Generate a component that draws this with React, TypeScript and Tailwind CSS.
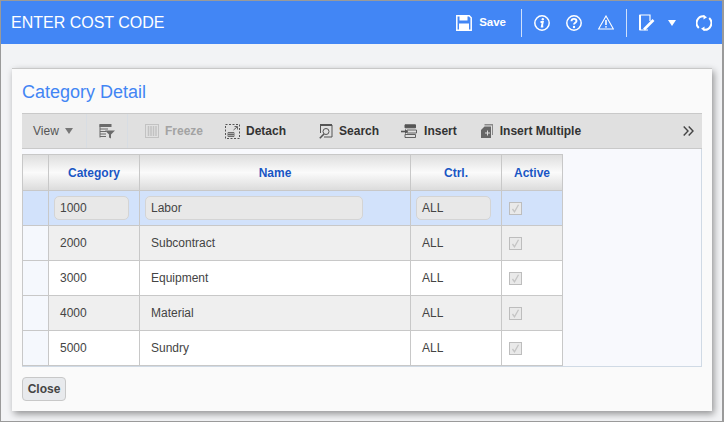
const rows = [
  { code: "1000", name: "Labor", ctrl: "ALL" },
  { code: "2000", name: "Subcontract", ctrl: "ALL" },
  { code: "3000", name: "Equipment", ctrl: "ALL" },
  { code: "4000", name: "Material", ctrl: "ALL" },
  { code: "5000", name: "Sundry", ctrl: "ALL" },
];

function SaveIcon() {
  return (
    <svg width="16" height="16" viewBox="0 0 16 16" fill="none" stroke="#fff" strokeWidth="1.5">
      <path d="M.8.8h12.400l2 2v12.400H.8z" />
      <rect x="3.500" y="1" width="8" height="4.500" fill="#fff" stroke="none" />
      <rect x="3" y="8.500" width="10" height="6.500" fill="#fff" stroke="none" />
    </svg>
  );
}

function InfoIcon() {
  return (
    <svg width="16" height="16" viewBox="0 0 16 16" fill="none" stroke="#fff">
      <circle cx="8" cy="8" r="7.200" strokeWidth="1.500" />
      <circle cx="8.800" cy="4.300" r="1.200" fill="#fff" stroke="none" />
      <path d="M6.500 7h2.300l-1 4.500h1.500" strokeWidth="1.900" />
    </svg>
  );
}

function HelpIcon() {
  return (
    <svg width="16" height="16" viewBox="0 0 16 16" fill="none" stroke="#fff">
      <circle cx="8" cy="8" r="7.200" strokeWidth="1.500" />
      <path d="M5.500 6.200c0-3.100 5-3.100 5-.2 0 1.800-2.500 1.800-2.500 3.600" strokeWidth="1.900" />
      <circle cx="8" cy="12" r="1.200" fill="#fff" stroke="none" />
    </svg>
  );
}

function WarnIcon() {
  return (
    <svg width="16" height="15" viewBox="0 0 16 15" fill="none" stroke="#fff">
      <path d="M8 1 15.400 14H.6z" strokeWidth="1.100" />
      <path d="M8 5v5" strokeWidth="1.600" />
      <circle cx="8" cy="11.800" r=".9" fill="#fff" stroke="none" />
    </svg>
  );
}

function NoteIcon() {
  return (
    <svg width="16" height="17" viewBox="0 0 16 17" fill="none" stroke="#fff">
      <path d="M9 16H1V1h10v6" strokeWidth="1.200" />
      <path d="M1 1v15" strokeWidth="2" />
      <path d="M5 15.500 14.500 6" strokeWidth="2.600" />
    </svg>
  );
}

function RefreshIcon() {
  return (
    <svg width="16" height="16" viewBox="0 0 16 16" fill="none" stroke="#fff" strokeWidth="2">
      <path d="M2.800 13A6.800 6.800 0 0 1 8.500 1.300" />
      <path d="M13.200 3a6.800 6.800 0 0 1-5.700 11.700" />
      <path d="M7.500 0v4.500l3.500-2.200z" fill="#fff" stroke="none" />
      <path d="M8.500 16v-4.500l-3.500 2.200z" fill="#fff" stroke="none" />
    </svg>
  );
}

function FilterIcon() {
  return (
    <svg width="16" height="15" viewBox="0 0 16 15" fill="none" stroke="#6b6b6b">
      <path d="M.5 1.500h12" strokeWidth="3" />
      <path d="M1 5h8M1 7.500h6M1 10h6M1 12.500h6" strokeWidth="1.200" />
      <path d="M1 .5v13" />
      <path d="M6 6.500h10l-4 4v4l-2-1v-3z" fill="#6b6b6b" stroke="none" />
    </svg>
  );
}

function FreezeIcon() {
  return (
    <svg width="14" height="14" viewBox="0 0 14 14" fill="none" stroke="#c2c2c2">
      <rect x=".5" y=".5" width="13" height="13" />
      <path d="M3.500 2v10M6 2v10M8.500 2v10M11 2v10" strokeWidth="1.500" />
    </svg>
  );
}

function DetachIcon() {
  return (
    <svg width="15" height="15" viewBox="0 0 15 15" fill="none" stroke="#555">
      <rect x=".5" y=".5" width="14" height="14" strokeDasharray="2 1.500" />
      <path d="M3 8.500h6v4H3zM5 8.500v4M7 8.500v4M3 10.500h6" strokeWidth=".8" />
      <path d="M8.500 6 12 3M9.500 2.500H12.500V5.500" strokeWidth=".9" />
    </svg>
  );
}

function SearchIcon() {
  return (
    <svg width="14" height="15" viewBox="0 0 14 15" fill="none" stroke="#555">
      <path d="M1.500 9V1H13v12H5" />
      <path d="M1 1h12" strokeWidth="2" />
      <circle cx="7" cy="7.500" r="3" />
      <path d="M5 10 .8 14.200" strokeWidth="1.600" />
    </svg>
  );
}

function InsertIcon() {
  return (
    <svg width="16" height="14" viewBox="0 0 16 14" fill="none" stroke="#555">
      <path d="M4 .8h10.500v3H4z" fill="#555" />
      <path d="M6 6h9.500v3H6zM4 10.500h10.500v3H4z" strokeWidth=".9" />
      <path d="M0 7.500h5" strokeWidth="1.600" />
      <path d="M4 5v5l3-2.500z" fill="#555" stroke="none" />
    </svg>
  );
}

function InsertMultipleIcon() {
  return (
    <svg width="12" height="14" viewBox="0 0 12 14">
      <path d="M3.500 0H12v11h-1V1.500H3.500z" fill="#8a8a8a" />
      <path d="M3.500 2.500H10V14H0V6z" fill="#666" />
      <path d="M4 8.500h2v-2h1v2h2v1H7v2H6v-2H4z" fill="#ddd" />
    </svg>
  );
}

function MoreIcon() {
  return (
    <svg width="11" height="10" viewBox="0 0 11 10" fill="none" stroke="#444" strokeWidth="1.400">
      <path d="M.7.5 5 5 .7 9.500M5.700.5 10 5 5.700 9.500" />
    </svg>
  );
}

function ToolButton({ icon, label, className, gap }: { icon: React.ReactNode; label: string; className?: string; gap?: string }) {
  return (
    <div className={`flex items-center ${gap ?? "gap-[6px]"} ${className ?? ""}`}>
      {icon}
      <span className="font-bold">{label}</span>
    </div>
  );
}

function TextBox({ value, width }: { value: string; width: string }) {
  return (
    <div className={`${width} h-[24px] bg-[#e8e8e8] border border-[#d4d4d4] rounded-[5px] pl-[5px] flex items-center text-[12px] text-[#444]`}>
      {value}
    </div>
  );
}

function CheckCell() {
  return (
    <div className="w-[13px] h-[13px] border border-[#bdbdbd] bg-[#e9e9e9] flex items-center justify-center">
      <svg width="9" height="9" viewBox="0 0 9 9" fill="none" stroke="#c4c4c4" strokeWidth="1.300">
        <path d="M1.500 5 3.500 7.800 7.500 .8" />
      </svg>
    </div>
  );
}

const colClass = "grid grid-cols-[27px_91px_271px_91px_61px]";

export default function App() {
  return (
    <div className="w-[724px] h-[422px] overflow-hidden bg-[#f2f3f5] flex flex-col border-t border-l border-r-2 border-b border-t-[#9a9a9a] border-l-[#9a9a9a] border-r-[#9a9a9a] border-b-[#9a9a9a] font-['Liberation_Sans',Arial,sans-serif]">
      {/* Header */}
      <div className="h-[43px] shrink-0 bg-[#4286f5] flex items-center text-white pl-[10px]">
        <h1 className="text-[16px] leading-none flex-1">ENTER COST CODE</h1>
        <div className="flex items-center gap-[7px] text-[11.500px] font-bold">
          <SaveIcon />
          <span>Save</span>
        </div>
        <div className="w-px h-[28px] bg-[#cfe0fb] ml-[15px] mr-[12px]" />
        <div className="flex items-center gap-[16px]">
          <InfoIcon />
          <HelpIcon />
          <WarnIcon />
        </div>
        <div className="w-px h-[28px] bg-[#cfe0fb] ml-[12px] mr-[12px]" />
        <NoteIcon />
        <div className="ml-[13px] w-0 h-0 border-x-[4.500px] border-x-transparent border-t-[6px] border-t-white" />
        <div className="ml-[20px] mr-[10px]">
          <RefreshIcon />
        </div>
      </div>

      {/* Dialog */}
      <div className="ml-[11px] mt-[24px] w-[700px] h-[343px] bg-[#fafafa] border-t border-[#c8c8c8] shadow-[2px_3px_7px_rgba(0,0,0,0.4)] flex flex-col px-[10px]">
        <h2 className="mt-[13px] h-[20px] text-[18px] leading-[20px] text-[#4285f4]">Category Detail</h2>

        <div className="mt-[11px] h-[36px] shrink-0 bg-[#e0e0e0] border-y border-[#c9c9c9] flex items-center text-[12px] text-[#333]">
          <div className="w-[65px] h-full flex items-center gap-[6px] pl-[11px] border-r border-[#d8dde3] text-[#555]">
            View
            <div className="w-0 h-0 border-x-[4.500px] border-x-transparent border-t-[6px] border-t-[#777]" />
          </div>
          <div className="w-[41px] h-full flex items-center pl-[12px] border-r border-[#d8dde3]">
            <FilterIcon />
          </div>
          <ToolButton icon={<FreezeIcon />} label="Freeze" className="ml-[17px] text-[#a3a3a3]" />
          <ToolButton icon={<DetachIcon />} label="Detach" className="ml-[22px]" />
          <ToolButton icon={<SearchIcon />} label="Search" className="ml-[33px]" />
          <ToolButton icon={<InsertIcon />} label="Insert" gap="gap-[7px]" className="ml-[22px]" />
          <ToolButton icon={<InsertMultipleIcon />} label="Insert Multiple" gap="gap-[7px]" className="ml-[24px]" />
          <div className="ml-auto mr-[8px]">
            <MoreIcon />
          </div>
        </div>

        {/* Grid */}
        <div className="h-[218px] shrink-0 bg-[#f8f9fd] border-r border-b border-[#d0dae5] pt-[5px]">
          <div className="w-[541px] border-b border-[#c8c8c8] text-[12px] text-[#444]">
            <div className={`${colClass} h-[36px] border-t border-[#c8c8c8] bg-gradient-to-b from-[#dedede] via-[#fbfbfb] to-[#dcdcdc] font-bold text-[#1a56c4]`}>
              <div className="border-l border-r border-[#c8c8c8]" />
              <div className="border-r border-[#c8c8c8] flex items-center justify-center">Category</div>
              <div className="border-r border-[#c8c8c8] flex items-center justify-center">Name</div>
              <div className="border-r border-[#c8c8c8] flex items-center justify-center">Ctrl.</div>
              <div className="border-r border-[#c8c8c8] flex items-center justify-center">Active</div>
            </div>
            {rows.map((row, i) => {
              const selected = i === 0;
              const bg = selected ? "bg-[#d2e2fb]" : i % 2 === 1 ? "bg-[#efefef]" : "bg-white";
              return (
                <div key={row.code} className={`${colClass} h-[35px] border-t border-[#c8c8c8] ${bg}`}>
                  <div className={`border-l border-r border-[#c8c8c8] ${selected ? "" : "bg-[#f5f8fd]"}`} />
                  <div className="border-r border-[#c8c8c8] flex items-center px-[5px]">
                    {selected ? <TextBox value={row.code} width="w-[75px]" /> : <span className="pl-[6px]">{row.code}</span>}
                  </div>
                  <div className="border-r border-[#c8c8c8] flex items-center px-[5px]">
                    {selected ? <TextBox value={row.name} width="w-[218px]" /> : <span className="pl-[6px]">{row.name}</span>}
                  </div>
                  <div className="border-r border-[#c8c8c8] flex items-center px-[5px]">
                    {selected ? <TextBox value={row.ctrl} width="w-[75px]" /> : <span className="pl-[6px]">{row.ctrl}</span>}
                  </div>
                  <div className="border-r border-[#c8c8c8] flex items-center pl-[7px]">
                    <CheckCell />
                  </div>
                </div>
              );
            })}
          </div>
        </div>

        <button className="mt-[10px] w-[44px] h-[24px] rounded-[4px] border border-[#c8c8c8] bg-[#e8eaed] text-[12px] font-bold text-[#444]">
          Close
        </button>
      </div>
    </div>
  );
}
